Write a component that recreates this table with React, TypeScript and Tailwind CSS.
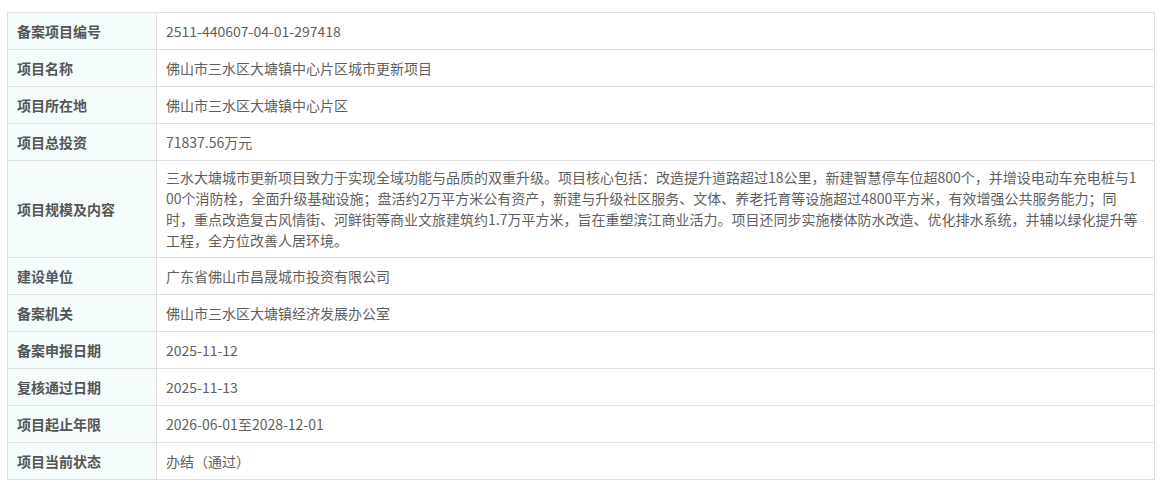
const rows: { label: string; value: React.ReactNode }[] = [
  { label: '备案项目编号', value: '2511-440607-04-01-297418' },
  { label: '项目名称', value: '佛山市三水区大塘镇中心片区城市更新项目' },
  { label: '项目所在地', value: '佛山市三水区大塘镇中心片区' },
  { label: '项目总投资', value: '71837.56万元' },
  {
    label: '项目规模及内容',
    value: (
      <>
        <span className="block">
          三水大塘城市更新项目致力于实现全域功能与品质的双重升级。项目核心包括：改造提升道路超过18公里，新建智慧停车位超800个，并增设电动车充电桩与1
        </span>
        <span className="block">
          00个消防栓，全面升级基础设施；盘活约2万平方米公有资产，新建与升级社区服务、文体、养老托育等设施超过4800平方米，有效增强公共服务能力；同
        </span>
        <span className="block">
          时，重点改造复古风情街、河鲜街等商业文旅建筑约1.7万平方米，旨在重塑滨江商业活力。项目还同步实施楼体防水改造、优化排水系统，并辅以绿化提升等
        </span>
        <span className="block">工程，全方位改善人居环境。</span>
      </>
    ),
  },
  { label: '建设单位', value: '广东省佛山市昌晟城市投资有限公司' },
  { label: '备案机关', value: '佛山市三水区大塘镇经济发展办公室' },
  { label: '备案申报日期', value: '2025-11-12' },
  { label: '复核通过日期', value: '2025-11-13' },
  { label: '项目起止年限', value: '2026-06-01至2028-12-01' },
  { label: '项目当前状态', value: '办结（通过）' },
];

export default function App() {
  return (
    <div
      className="bg-white w-[1160px] h-[487px] pl-[7px] pt-[12px]"
      style={{ fontFamily: '"Microsoft YaHei", "Noto Sans CJK SC", "Noto Sans", sans-serif' }}
    >
      <div className="w-[1148px] border border-[#e0e0e0] text-[14px] leading-[21px]">
        {rows.map((r, i) => (
          <div key={r.label} className={`flex ${i > 0 ? 'border-t border-[#e0e0e0]' : ''}`}>
            <div className="w-[149px] shrink-0 bg-[#f5fcfc] border-r border-[#e0e0e0] pl-[9px] py-[6px] min-h-[36px] flex items-center font-bold text-[#555555]">
              {r.label}
            </div>
            <div className="flex-1 min-w-0 px-[9px] py-[6px] min-h-[36px] flex flex-col justify-center text-[#5f5f5f] whitespace-nowrap">
              {typeof r.value === 'string' ? <span>{r.value}</span> : r.value}
            </div>
          </div>
        ))}
      </div>
    </div>
  );
}
